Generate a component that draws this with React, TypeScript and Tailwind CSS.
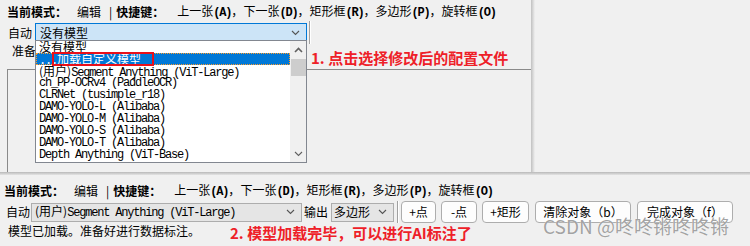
import { ReactNode } from 'react';

const cjk = "font-['Noto_Sans_CJK_SC',sans-serif]";
const mono = "font-['Liberation_Mono','Noto_Sans_CJK_SC',monospace] tracking-[-1.2px]";

function M({ children, bold }: { children: ReactNode; bold?: boolean }) {
    return <span className={`${mono} ${bold ? 'font-bold' : ''}`}>{children}</span>;
}

function C({ children }: { children: ReactNode }) {
    return <span className="tracking-normal font-['Noto_Sans_CJK_SC',sans-serif]">{children}</span>;
}

function Chevron({ up = false, color = '#555' }: { up?: boolean; color?: string }) {
    return (
        <svg width="9" height="6" viewBox="0 0 9 6" className="shrink-0">
            <polyline
                points={up ? '1,5 4.5,1.5 8,5' : '1,1 4.5,4.5 8,1'}
                fill="none"
                stroke={color}
                strokeWidth={up ? 1.6 : 1.1}
            />
        </svg>
    );
}

function ShortcutRow({ className = '' }: { className?: string }) {
    const keys: [string, string][] = [
        ['上一张', 'A'],
        ['下一张', 'D'],
        ['矩形框', 'R'],
        ['多边形', 'P'],
        ['旋转框', 'O'],
    ];
    return (
        <div className={`flex items-center h-[14px] text-[12px] leading-[14px] text-black whitespace-nowrap ${cjk} ${className}`}>
            <span className="font-bold">当前模式：</span>
            <span className="ml-[10px]">编辑</span>
            <span className="ml-[8px]">|</span>
            <span className="ml-[4px] font-bold">快捷键：</span>
            <span className="ml-[13px] flex">
                {keys.map(([label, key], i) => (
                    <span key={key}>
                        {label}
                        <M bold>({key})</M>
                        {i < keys.length - 1 && '，'}
                    </span>
                ))}
            </span>
        </div>
    );
}

const models: ReactNode[] = [
    <C>没有模型</C>,
    <span>...<C>加载自定义模型</C></span>,
    <span><C>(用户)</C>Segment Anything (ViT-Large)</span>,
    'ch_PP-OCRv4 (PaddleOCR)',
    'CLRNet (tusimple_r18)',
    'DAMO-YOLO-L (Alibaba)',
    'DAMO-YOLO-M (Alibaba)',
    'DAMO-YOLO-S (Alibaba)',
    'DAMO-YOLO-T (Alibaba)',
    'Depth Anything (ViT-Base)',
];

function Dropdown() {
    return (
        <div className="absolute left-[35px] top-[40px] w-[272px] h-[123px] border border-[#828790] bg-white flex">
            <div className="flex-1 flex flex-col">
                {models.map((m, i) => (
                    <div
                        key={i}
                        className={`relative h-[12px] leading-[12px] pl-[3px] text-[12px] whitespace-nowrap ${mono} ${
                            i === 1
                                ? 'bg-[#0078d7] text-white outline outline-1 outline-dotted outline-[#ff9c2a] -outline-offset-1'
                                : 'text-black'
                        }`}
                    >
                        {m}
                        {i === 1 && (
                            <div className="absolute left-[16px] top-[-1px] w-[102px] h-[14px] border-2 border-[#e8101a]" />
                        )}
                    </div>
                ))}
            </div>
            <div className="w-[16px] bg-[#f0f0f0] flex flex-col items-center">
                <div className="h-[18px] flex items-center justify-center">
                    <Chevron up color="#606060" />
                </div>
                <div className="w-[15px] h-[17px] bg-[#cdcdcd]" />
                <div className="flex-1" />
                <div className="h-[16px] flex items-center justify-center">
                    <Chevron color="#606060" />
                </div>
            </div>
        </div>
    );
}

function Button({ children, width }: { children: ReactNode; width: string }) {
    return (
        <div className={`${width} h-[22px] shrink-0 rounded-[4px] border border-[#adadad] bg-[#fdfdfd] flex items-center justify-center text-[12px] leading-[14px] text-black ${cjk}`}>
            {children}
        </div>
    );
}

export default function App() {
    return (
        <div className={`relative w-[750px] h-[246px] overflow-hidden bg-[#f0f0f0] ${cjk}`}>
            <div className="flex h-[172px]">
                <div className="relative w-[531px] h-full flex flex-col">
                    <ShortcutRow className="mt-[5px] pl-[7px]" />

                    <div className="mt-[2px] h-[23px] flex items-center text-[12px] leading-[14px]">
                        <span className="ml-[8px] w-[27px]">自动</span>
                        <div className="w-[272px] h-[19px] border border-[#0078d7] bg-[#cce4f7] flex items-center pl-[4px] pr-[6px]">
                            <span className="flex-1">没有模型</span>
                            <Chevron />
                        </div>
                        <div className="ml-[2px] w-[2px] h-[23px] border-l border-[#a0a0a0] border-r border-r-white" />
                    </div>

                    <div className="h-[14px] mt-[0px] pl-[12px] text-[12px] leading-[14px]">准备</div>

                    <div className="ml-[7px] mt-[11px] flex-1 border-t border-l border-[#8a8a8a]" />

                    <div className="absolute left-[311px] top-[49px] text-[15px] leading-[17px] font-bold text-[#ee2028] whitespace-nowrap">
                        1. 点击选择修改后的配置文件
                    </div>

                    <Dropdown />
                </div>
                <div className="w-[4px] h-full bg-gradient-to-r from-[#c0c0c0] to-[#f0f0f0]" />
            </div>
            <div className="h-[3px] bg-gradient-to-b from-[#b8b8b8] to-[#e4e4e4]" />

            <ShortcutRow className="mt-[9px] pl-[4px]" />

            <div className="mt-[3px] h-[22px] flex items-center text-[12px] leading-[14px]">
                <span className="ml-[6px] w-[25px]">自动</span>
                <div className="w-[271px] h-[19px] border border-[#adadad] bg-[#e5e5e5] flex items-center pl-[3px] pr-[6px]">
                    <span className={`flex-1 whitespace-nowrap ${mono}`}>
                        <C>(用户)</C>Segment Anything (ViT-Large)
                    </span>
                    <Chevron />
                </div>
                <span className="ml-[2px] w-[27px]">输出</span>
                <div className="w-[63px] h-[19px] border border-[#adadad] bg-[#e5e5e5] flex items-center pl-[2px] pr-[6px]">
                    <span className="flex-1">多边形</span>
                    <Chevron />
                </div>
                <div className="ml-[3px] w-[2px] h-[22px] border-l border-[#a0a0a0] border-r border-r-white" />
                <div className="ml-[2px] flex gap-[5px]">
                    <Button width="w-[35px]">+点</Button>
                    <Button width="w-[36px]">-点</Button>
                </div>
                <div className="ml-[5px] flex gap-[6px]">
                    <Button width="w-[47px]">+矩形</Button>
                    <Button width="w-[96px]">清除对象（b）</Button>
                    <Button width="w-[96px]">完成对象（f）</Button>
                </div>
            </div>

            <div className="h-[14px] mt-[1px] flex items-center text-[12px] leading-[14px] whitespace-nowrap">
                <span className="ml-[8px] w-[222px]">模型已加载。准备好进行数据标注。</span>
                <span className="text-[15px] leading-[17px] font-bold text-[#ee2028] mt-[2px]">
                    2. 模型加载完毕，可以进行AI标注了
                </span>
            </div>

            <div className="absolute left-[543px] top-[214px] text-[19px] leading-[24px] text-[#8a8a8a]/80 whitespace-nowrap [text-shadow:0_0_1px_#fff]">
                CSDN @咚咚锵咚咚锵
            </div>
        </div>
    );
}
